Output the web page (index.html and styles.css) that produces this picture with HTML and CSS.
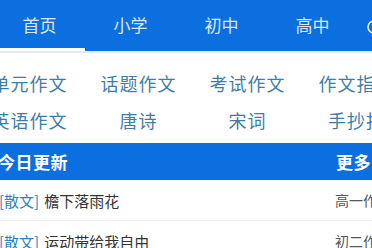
FILE: index.html
```html
<!DOCTYPE html>
<html lang="zh-CN">
<head>
    <meta charset="UTF-8">
    <meta name="viewport" content="width=device-width, initial-scale=1.0">
    <title>作文网</title>
    <link rel="stylesheet" href="styles.css">
</head>
<body>
    <div class="page">
        <nav class="nav">
            <a class="tab active">首页</a>
            <a class="tab">小学</a>
            <a class="tab">初中</a>
            <a class="tab">高中</a>
            <span class="search">
                <svg width="18" height="18" viewBox="0 0 18 18"><circle cx="8" cy="8" r="6" fill="none" stroke="#e8f0fb" stroke-width="1.6"/><line x1="12.5" y1="12.5" x2="16.5" y2="16.5" stroke="#e8f0fb" stroke-width="1.6"/></svg>
            </span>
        </nav>

        <div class="cats">
            <a>单元作文</a>
            <a>话题作文</a>
            <a>考试作文</a>
            <a>作文指导</a>
            <a>英语作文</a>
            <a>唐诗</a>
            <a>宋词</a>
            <a>手抄报</a>
        </div>

        <div class="bar">
            <span class="bar-title">今日更新</span>
            <span class="bar-more">更多</span>
        </div>

        <ul class="list">
            <li><span class="tag">[散文]</span><span class="title">檐下落雨花</span><span class="grade">高一作文</span></li>
            <li><span class="tag">[散文]</span><span class="title">运动带给我自由</span><span class="grade">初二作文</span></li>
        </ul>
    </div>
</body>
</html>
```

FILE: styles.css
```css
body {
    margin: 0;
    overflow: hidden;
    background: #fff;
    font-family: "Noto Sans CJK SC", "Noto Sans", sans-serif;
}
.page {
    width: 430px;
    margin-left: -19px;
}
.nav {
    display: flex;
    align-items: stretch;
    height: 51px;
    padding-left: 13px;
    background: #0c6fe0;
    border-bottom: 2px solid #e6e9ee;
}
.tab {
    width: 91px;
    text-align: center;
    line-height: 50px;
    font-size: 17px;
    color: #dce8f8;
    box-sizing: border-box;
}
.tab.active {
    border-bottom: 3px solid #fff;
}
.search {
    display: flex;
    align-items: center;
    margin-left: 8px;
    margin-top: 4px;
}
.cats {
    display: grid;
    grid-template-columns: repeat(4, 109px);
    grid-auto-rows: 37px;
    margin-left: -6px;
    padding-top: 12px;
    padding-bottom: 4px;
}
.cats a {
    text-align: center;
    line-height: 37px;
    font-size: 18px;
    color: #3d7ea7;
    letter-spacing: 1px;
}
.bar {
    display: flex;
    justify-content: space-between;
    align-items: center;
    height: 37px;
    padding: 0 40px 0 17px;
    background: #0c6fe0;
    color: #fff;
    font-size: 17px;
    font-weight: bold;
    letter-spacing: 0.5px;
}
.list {
    list-style: none;
    margin: 0;
    padding: 0;
}
.list li {
    display: flex;
    align-items: center;
    height: 40px;
    padding: 0 6px 0 18px;
    border-bottom: 1px solid #eceef1;
    font-size: 15px;
}
.tag {
    color: #2f80c0;
    margin-right: 5px;
}
.title {
    flex: 1;
    color: #333;
}
.grade {
    width: 70px;
    color: #555;
    font-size: 14px;
}
```
